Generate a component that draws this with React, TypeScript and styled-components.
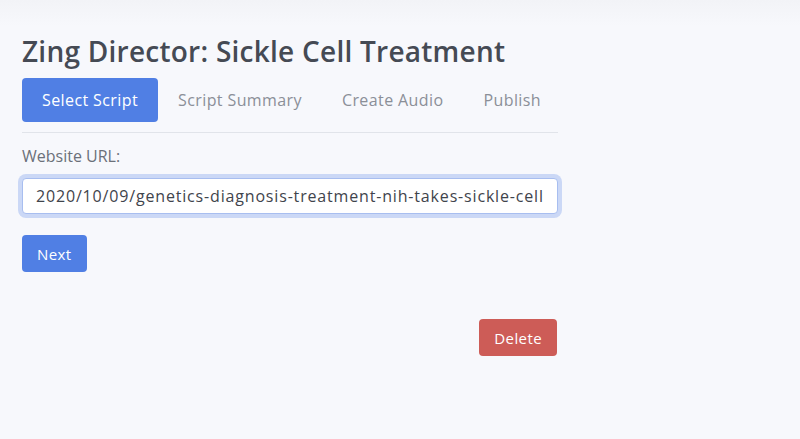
import React from 'react';
import styled, { createGlobalStyle } from 'styled-components';

const GlobalStyle = createGlobalStyle`
  html, body {
    margin: 0;
    padding: 0;
  }
  body {
    background: linear-gradient(#f2f3f7 0, #f7f8fc 26px, #f7f8fc 100%);
    min-height: 439px;
    font-family: 'Open Sans', 'Liberation Sans', sans-serif;
    color: #474c55;
  }
`;

const Page = styled.main`
  width: 536px;
  padding: 32px 0 0 22px;
  display: flex;
  flex-direction: column;
`;

const Title = styled.h1`
  margin: 0 0 8px;
  font-size: 28px;
  font-weight: 600;
  line-height: 38px;
  letter-spacing: 0.25px;
  color: #454a54;
`;

const Tabs = styled.nav`
  display: flex;
  align-items: center;
  padding-bottom: 10px;
  border-bottom: 1px solid #e1e4ea;
`;

const Tab = styled.button<{ $active?: boolean }>`
  flex-shrink: 0;
  height: 44px;
  padding: 0 20px;
  border: none;
  border-radius: 4px;
  white-space: nowrap;
  font-family: inherit;
  font-size: 16px;
  letter-spacing: 0.4px;
  background: ${(p) => (p.$active ? '#507fe4' : 'transparent')};
  color: ${(p) => (p.$active ? '#ffffff' : '#8b8f98')};
  cursor: pointer;
`;

const Label = styled.label`
  margin-top: 13px;
  font-size: 16px;
  line-height: 20px;
  color: #6b7079;
`;

const UrlInput = styled.input`
  margin-top: 12px;
  height: 36px;
  box-sizing: border-box;
  padding: 0 13px;
  border: 1px solid #a8bef0;
  border-radius: 4px;
  box-shadow: 0 0 0 4px #cbd8f6;
  outline: none;
  font-family: inherit;
  font-size: 16px;
  letter-spacing: 0.83px;
  color: #3f444c;
  background: #fff;
`;

const Button = styled.button<{ $tone: 'primary' | 'danger' }>`
  height: 37px;
  padding: 0 15px;
  border: none;
  border-radius: 4px;
  white-space: nowrap;
  font-family: inherit;
  font-size: 15px;
  letter-spacing: 0.4px;
  color: #fff;
  background: ${(p) => (p.$tone === 'primary' ? '#507fe4' : '#cd5c57')};
  cursor: pointer;
`;

const Row = styled.div<{ $end?: boolean }>`
  display: flex;
  justify-content: ${(p) => (p.$end ? 'flex-end' : 'flex-start')};
`;

const NextRow = styled(Row)`
  margin-top: 21px;
`;

const DeleteRow = styled(Row)`
  margin-top: 47px;
  padding-right: 1px;
`;

export default function App() {
  return (
    <>
      <GlobalStyle />
      <Page>
        <Title>Zing Director: Sickle Cell Treatment</Title>
        <Tabs>
          <Tab $active>Select Script</Tab>
          <Tab>Script Summary</Tab>
          <Tab>Create Audio</Tab>
          <Tab>Publish</Tab>
        </Tabs>
        <Label htmlFor="url">Website URL:</Label>
        <UrlInput
          id="url"
          defaultValue="2020/10/09/genetics-diagnosis-treatment-nih-takes-sickle-cell"
        />
        <NextRow>
          <Button $tone="primary">Next</Button>
        </NextRow>
        <DeleteRow $end>
          <Button $tone="danger">Delete</Button>
        </DeleteRow>
      </Page>
    </>
  );
}
